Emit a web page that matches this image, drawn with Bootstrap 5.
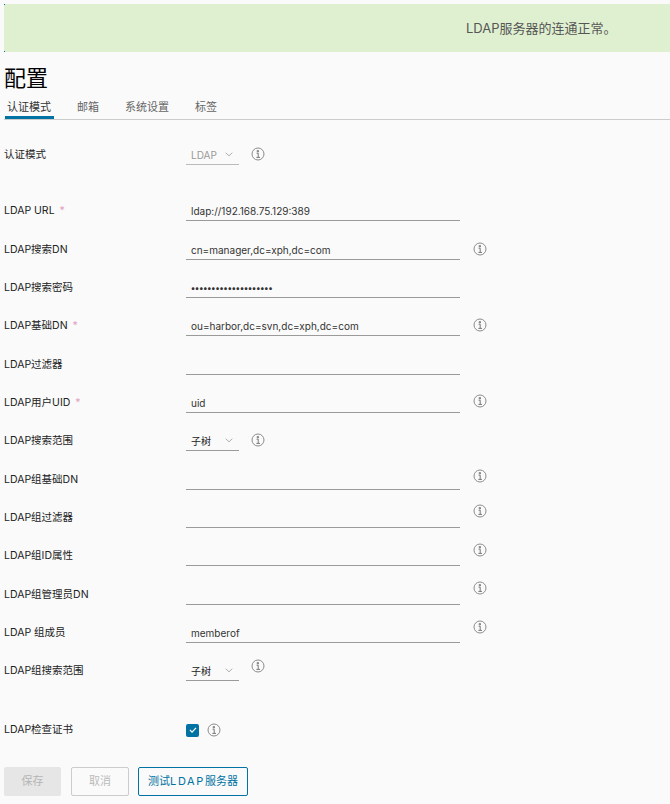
<!DOCTYPE html>
<html lang="zh"><head><meta charset="utf-8"><title>配置</title>
<link href="https://cdn.jsdelivr.net/npm/bootstrap@5.3.0/dist/css/bootstrap.min.css" rel="stylesheet">
<style>
html,body{height:804px;overflow:hidden}
body{background:#fafafa;color:#333;font-family:Inter,"Noto Sans CJK SC",sans-serif;font-size:10.5px;line-height:14px;padding:4px 0 0 4px}
.okbar{height:48px;background:#dff0d0;color:#565656;font-size:13px;padding-left:462px;position:relative}
.okbar::before,.okbar::after{content:"";position:absolute;left:0;width:1px;height:1px;background:#0072a3}
.okbar::before{top:0}.okbar::after{bottom:0}
.ttl{font-size:22px;line-height:28px;font-weight:400;color:#000;margin:12px 0 0;height:28px}
.tabline{height:28px;border-bottom:1px solid #ccc}
.tabitem{display:block;height:27px;font-size:11px;line-height:14px;color:#666;padding:8px 0 0;margin-right:26px;text-decoration:none;white-space:nowrap}
.tabitem.on{color:#333;padding:8px 2px 0;margin-left:1px;margin-right:23px;border-bottom:3px solid #0072a3;width:49px}
.frow{height:38.33px;align-items:flex-end}
.flabel{width:182px;flex:none;color:#222;align-self:flex-end;padding-bottom:3px}
.req{color:#e0a0c0;margin-left:5px}
.fbox{width:274px;height:22px;border-bottom:1px solid #9a9a9a;padding:5px 5px 0;color:#333;flex:none;font-size:10px}
.dots{font-size:8.6px;font-weight:700}
.pick{width:53px;height:22px;border-bottom:1px solid #9a9a9a;padding:5px 5px 0;color:#222;flex:none;position:relative;font-size:10px}
.pick.off{color:#999;border-color:#bbb}
.pick svg{position:absolute;right:6px;top:9px}
.inf{flex:none;display:block;color:#888}
.infw{margin-left:13px}.infs{margin-left:12px}
.bt3{margin-bottom:3px}.bt4{margin-bottom:4px}.bt5{margin-bottom:5px}.bt6{margin-bottom:6px}.bt7{margin-bottom:7px}.bt8{margin-bottom:8px}.bt9{margin-bottom:9px}.bt10{margin-bottom:10px}
.sp1{height:18px}.authrow{height:45px}
.chkrow{height:24px;align-items:center;margin-top:37px}
.chkbox{width:13px;height:13px;background:#0072a3;border-radius:2px;flex:none;display:flex;align-items:center;justify-content:center}
.actions{margin-top:25px;gap:10px}
.xbtn{height:29px;border-radius:2px;font-size:11px;line-height:27px;padding:0;text-align:center;border:1px solid}
.xsave{width:57px;background:#e6e6e6;border-color:#e6e6e6;color:#b5b5b5}
.xcancel{width:58px;background:transparent;border-color:#ccc;color:#bbb}
.xtest{width:110px;margin-left:-1px;background:transparent;border-color:#0072a3;color:#0072a3}
.spaced{letter-spacing:1.6px}
</style></head><body>
<div class="okbar d-flex align-items-center">LDAP服务器的连通正常。</div>
<h1 class="ttl">配置</h1>
<nav class="tabline d-flex"><a class="tabitem on" href="#">认证模式</a><a class="tabitem" href="#">邮箱</a><a class="tabitem" href="#">系统设置</a><a class="tabitem" href="#">标签</a></nav>
<svg width="0" height="0" class="d-block"><defs><symbol id="i" viewBox="0 0 14 14"><circle cx="7" cy="7" r="6" fill="none" stroke="#8c8c8c" stroke-width="1"/><path d="M6.2 3.6h1.3v1.2H6.2zM5.6 6.2H7.2V10.2M5.4 10.4H9" fill="none" stroke="#777" stroke-width="1"/></symbol><symbol id="c" viewBox="0 0 8 5"><path d="M.8.7 4 3.9 7.2.7" fill="none" stroke="#aaa" stroke-width="1"/></symbol></defs></svg>
<div class="d-flex frow authrow"><div class="flabel">认证模式</div><div class="pick off">LDAP<svg width="8" height="5"><use href="#c"/></svg></div><svg class="inf infs bt4" width="14" height="14"><use href="#i"/></svg></div>
<div class="sp1"></div>
<div class="d-flex frow"><div class="flabel">LDAP URL<span class="req">*</span></div><div class="fbox">ldap://192.168.75.129:389</div></div>
<div class="d-flex frow"><div class="flabel">LDAP搜索DN</div><div class="fbox">cn=manager,dc=xph,dc=com</div><svg class="inf infw bt4" width="14" height="14"><use href="#i"/></svg></div>
<div class="d-flex frow"><div class="flabel">LDAP搜索密码</div><div class="fbox dots">••••••••••••••••••••</div></div>
<div class="d-flex frow"><div class="flabel">LDAP基础DN<span class="req">*</span></div><div class="fbox">ou=harbor,dc=svn,dc=xph,dc=com</div><svg class="inf infw bt4" width="14" height="14"><use href="#i"/></svg></div>
<div class="d-flex frow"><div class="flabel">LDAP过滤器</div><div class="fbox"></div></div>
<div class="d-flex frow"><div class="flabel">LDAP用户UID<span class="req">*</span></div><div class="fbox">uid</div><svg class="inf infw bt5" width="14" height="14"><use href="#i"/></svg></div>
<div class="d-flex frow"><div class="flabel">LDAP搜索范围</div><div class="pick">子树<svg width="8" height="5"><use href="#c"/></svg></div><svg class="inf infs bt4" width="14" height="14"><use href="#i"/></svg></div>
<div class="d-flex frow"><div class="flabel">LDAP组基础DN</div><div class="fbox"></div><svg class="inf infw bt7" width="14" height="14"><use href="#i"/></svg></div>
<div class="d-flex frow"><div class="flabel">LDAP组过滤器</div><div class="fbox"></div><svg class="inf infw bt10" width="14" height="14"><use href="#i"/></svg></div>
<div class="d-flex frow"><div class="flabel">LDAP组ID属性</div><div class="fbox"></div><svg class="inf infw bt9" width="14" height="14"><use href="#i"/></svg></div>
<div class="d-flex frow"><div class="flabel">LDAP组管理员DN</div><div class="fbox"></div><svg class="inf infw bt10" width="14" height="14"><use href="#i"/></svg></div>
<div class="d-flex frow"><div class="flabel">LDAP 组成员</div><div class="fbox">memberof</div><svg class="inf infw bt9" width="14" height="14"><use href="#i"/></svg></div>
<div class="d-flex frow"><div class="flabel">LDAP组搜索范围</div><div class="pick">子树<svg width="8" height="5"><use href="#c"/></svg></div><svg class="inf infs bt8" width="14" height="14"><use href="#i"/></svg></div>
<div class="d-flex chkrow"><div class="flabel pb-0 align-self-center">LDAP检查证书</div><div class="chkbox"><svg width="8" height="6" viewBox="0 0 9 7"><path d="M1 3.5 3.4 6 8 1" fill="none" stroke="#fff" stroke-width="1.4"/></svg></div><svg class="inf ms-2" width="14" height="14"><use href="#i"/></svg></div>
<div class="d-flex actions"><button class="xbtn xsave" type="button">保存</button><button class="xbtn xcancel" type="button">取消</button><button class="xbtn xtest" type="button">测试<span class="spaced">LDAP</span>服务器</button></div>
</body></html>
